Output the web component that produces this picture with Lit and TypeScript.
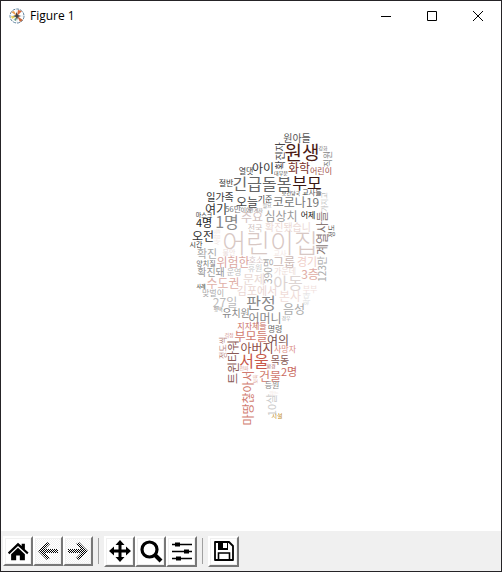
import { LitElement, html, svg, css } from "lit";
import { customElement } from "lit/decorators.js";

type Word = [text: string, cx: number, cy: number, size: number, color: string, vertical?: boolean];

const WORDS: Word[] = [
  ["원아들", 297, 138, 10, "#555"],
  ["원생", 302, 153, 19, "#4a1a14"],
  ["확진자", 280, 156, 10, "#444", true],
  ["직원", 328, 159, 9, "#888", true],
  ["강화", 323, 148, 5, "#777"],
  ["화학", 299, 168, 12, "#7a2f28"],
  ["어린이", 321, 171, 8, "#a0504a"],
  ["대부분", 281, 173, 5, "#444"],
  ["아이", 263, 168, 12, "#333"],
  ["열댓", 246, 171, 8, "#444"],
  ["절반", 226, 183, 8, "#333"],
  ["긴급돌봄", 262, 184, 16, "#666"],
  ["부모", 307, 183, 16, "#3a1712"],
  ["보건당국", 291, 193, 5, "#333"],
  ["교사들", 312, 192, 7, "#444"],
  ["일가족", 220, 197, 10, "#333"],
  ["오늘", 247, 202, 12, "#444"],
  ["기준", 265, 199, 8, "#444"],
  ["필요", 267, 205, 5, "#999"],
  ["여기", 216, 209, 12, "#333"],
  ["56만", 233, 209, 8, "#777"],
  ["이에", 246, 210, 6, "#777"],
  ["관계자", 256, 210, 5, "#888"],
  ["마스크", 204, 215, 6, "#333"],
  ["4명", 204, 223, 11, "#222"],
  ["1명", 227, 222, 16, "#888"],
  ["오전", 203, 236, 12, "#333"],
  ["시간", 196, 244, 7, "#333"],
  ["사람들", 217, 237, 6, "#efe4e1", true],
  ["주요", 252, 217, 12, "#d3c3bf"],
  ["전국", 255, 228, 8, "#cdbfbc"],
  ["코로나19", 296, 202, 12, "#777"],
  ["심상치", 281, 216, 12, "#999"],
  ["어제", 308, 215, 8, "#111"],
  ["확진됐습니", 288, 227, 10, "#ecdad6"],
  ["어린이집", 270, 243, 26, "#d8c8c4"],
  ["계열사들", 322, 233, 12, "#8a7a78", true],
  ["정도", 331, 231, 7, "#555", true],
  ["가지고", 324, 202, 7, "#bbb", true],
  ["확진", 207, 254, 11, "#aaa"],
  ["양치질", 206, 263, 7, "#777"],
  ["불안", 229, 252, 7, "#ecdedc"],
  ["위험한", 233, 262, 12, "#dba79f"],
  ["호소", 256, 260, 8, "#d8c8c8"],
  ["휴원", 255, 268, 8, "#ccc"],
  ["교사", 280, 253, 7, "#f3e6e3"],
  ["그룹", 284, 262, 12, "#cbb8b4"],
  ["경기", 307, 262, 11, "#f0cfc8"],
  ["확진돼", 211, 272, 10, "#999"],
  ["운영", 234, 272, 8, "#bbb"],
  ["390명", 268, 271, 10, "#aaa", true],
  ["가운데", 285, 271, 8, "#ecdcd8"],
  ["3층", 310, 274, 12, "#e0aca4"],
  ["123만", 322, 269, 10, "#aaa", true],
  ["문제", 254, 279, 12, "#e8d8d4"],
  ["아동", 288, 283, 16, "#ddd5d3"],
  ["수도권", 223, 283, 12, "#dfb0a8"],
  ["사례", 201, 286, 5, "#111"],
  ["맞벌이", 213, 293, 8, "#aaa"],
  ["김포에서", 257, 291, 11, "#ead6d2"],
  ["부부", 310, 289, 8, "#f0e0dc"],
  ["본사", 290, 296, 12, "#f0dcd8"],
  ["27일", 225, 302, 12, "#bbb"],
  ["판정", 261, 303, 16, "#888"],
  ["음성", 294, 309, 12, "#aaa"],
  ["확대", 306, 299, 7, "#ddd", true],
  ["평택", 218, 309, 5, "#888"],
  ["유치원", 236, 313, 10, "#888"],
  ["어머니", 265, 318, 12, "#888"],
  ["경우", 286, 318, 5, "#aaa"],
  ["지자체들", 252, 326, 8, "#c96a5e"],
  ["명령", 275, 329, 8, "#666"],
  ["걱정", 229, 335, 5, "#d2908a"],
  ["부모들", 251, 336, 12, "#d07a6e"],
  ["여의", 278, 340, 12, "#7a5552"],
  ["정도씩", 223, 348, 8, "#b98680", true],
  ["트윈타워", 233, 362, 12, "#8a5a56", true],
  ["아버지", 257, 348, 12, "#8a4a44"],
  ["사망자", 285, 349, 8, "#d98a80"],
  ["서울", 254, 361, 16, "#c8584a"],
  ["목동", 280, 360, 10, "#8a5a56"],
  ["환경", 271, 366, 5, "#a66"],
  ["전파", 244, 368, 5, "#d99a92"],
  ["건물", 270, 376, 12, "#d07a6e"],
  ["2명", 289, 372, 11, "#c96a5e"],
  ["보육", 255, 379, 5, "#e0a69e", true],
  ["등원", 272, 385, 8, "#888"],
  ["않는", 274, 393, 5, "#f2e4e0"],
  ["마땅찮아서", 248, 398, 12, "#d07a6e", true],
  ["10살", 272, 405, 11, "#ccc", true],
  ["시설", 277, 416, 6, "#c08a20"],
];

@customElement("word-cloud")
export class WordCloud extends LitElement {
  static styles = css`
    :host {
      display: flex;
      justify-content: center;
      align-items: center;
    }
    .cloud {
      width: 100%;
      height: 100%;
    }
    .word {
      font-family: "Noto Sans CJK KR", sans-serif;
      font-weight: 400;
      text-anchor: middle;
    }
    .large {
      font-weight: 300;
    }
  `;

  render() {
    return html`<svg class="cloud" viewBox="1 30 500 501" role="img" aria-label="Word cloud">
      ${WORDS.map(
        ([text, cx, cy, size, color, vertical]) => svg`<text
          class=${size > 19 ? "word large" : "word"}
          transform=${`translate(${cx} ${cy}) rotate(${vertical ? -90 : 0})`}
          dy="0.38em"
          font-size=${size}
          fill=${color}
        >${text}</text>`
      )}
    </svg>`;
  }
}

const stipple = svg`<defs>
  <pattern id="dots" width="2" height="2" patternUnits="userSpaceOnUse">
    <rect width="2" height="2" fill="#fff"/>
    <rect width="1" height="1" fill="#000"/>
    <rect x="1" y="1" width="1" height="1" fill="#000"/>
  </pattern>
</defs>`;

const ICONS = {
  home: svg`<path d="M1 13.500 12 3l4 3.500V4h3.500v6l4 3.500-1.500 2L12 6.500 2.500 15.500z"/><path d="M4.500 15.500 12 8.500l7.500 7V22H14v-5h-4v5H4.500z"/>`,
  back: svg`${stipple}<path fill="url(#dots)" d="M2 12 11 3l3 2-5 5h13v4H9l5 5-3 2z"/>`,
  forward: svg`${stipple}<path fill="url(#dots)" d="M22 12 13 3l-3 2 5 5H2v4h13l-5 5 3 2z"/>`,
  pan: svg`<path d="M12 1l4.500 5h-3v4.500h4.500v-3L23 12l-5 4.500v-3h-4.500V18h3L12 23l-4.500-5h3v-4.500H6v3L1 12l5-4.500v3h4.500V6h-3z"/>`,
  zoom: svg`<circle cx="10.500" cy="10.500" r="7.500" fill="none" stroke="#000" stroke-width="3.200"/><path d="M16 16l6 6" stroke="#000" stroke-width="4"/>`,
  sliders: svg`<path d="M2 5.500h20M2 12.500h20M2 19.500h20" stroke="#000" stroke-width="1.600"/><path d="M5 3.500h5v4H5zM14 10.500h5v4h-5zM6 17.500h5v4H6z"/>`,
  save: svg`<path d="M3 3h14l4 4v14H3z" fill="none" stroke="#000" stroke-width="1.800" stroke-linejoin="round"/><path d="M6 3h10v8H6z"/><path d="M11 4h4v5h-4z" fill="#fff"/><path d="M6.500 21v-7h11v7" fill="none" stroke="#000" stroke-width="1.600"/>`,
};

type Tool = { icon: keyof typeof ICONS; label: string; disabled?: boolean };

const GROUPS: Tool[][] = [
  [
    { icon: "home", label: "Home" },
    { icon: "back", label: "Back", disabled: true },
    { icon: "forward", label: "Forward", disabled: true },
  ],
  [
    { icon: "pan", label: "Pan" },
    { icon: "zoom", label: "Zoom" },
    { icon: "sliders", label: "Configure subplots" },
  ],
  [{ icon: "save", label: "Save" }],
];

@customElement("app-root")
export class AppRoot extends LitElement {
  static styles = css`
    :host {
      display: flex;
      flex-direction: column;
      box-sizing: border-box;
      min-height: 100vh;
      border: 1px solid #252326;
      background: #fff;
      color: #000;
      font-family: "Noto Sans", sans-serif;
    }
    .titlebar {
      display: flex;
      align-items: center;
      height: 29px;
      padding-left: 8px;
    }
    .logo {
      width: 16px;
      height: 16px;
      margin-right: 5px;
    }
    .title {
      flex: 1;
      margin: 0;
      font: 400 12px/16px "Open Sans", sans-serif;
    }
    .control {
      display: grid;
      place-items: center;
      width: 46px;
      height: 29px;
      padding: 0;
      border: 0;
      background: none;
    }
    .control svg {
      width: 10px;
      height: 10px;
    }
    .canvas {
      flex: 1;
      min-height: 0;
    }
    .toolbar {
      display: flex;
      align-items: center;
      height: 40px;
      padding-left: 2px;
      background: #f0f0f0;
    }
    .group {
      display: flex;
      align-items: center;
    }
    .group + .group::before {
      content: "";
      width: 1px;
      height: 26px;
      margin: 0 5px;
      background: #a0a0a0;
    }
    .tool {
      box-sizing: border-box;
      display: grid;
      place-items: center;
      width: 30px;
      height: 30px;
      padding: 0;
      border: 2px solid;
      border-color: #fff #777 #777 #fff;
      background: #fff;
      box-shadow: inset 0 0 0 1px #f0f0f0;
    }
    .tool:disabled {
      background: repeating-conic-gradient(#f0f0f0 0 25%, #fff 0 50%) 0 0 / 2px 2px;
    }
    .group:nth-child(n + 2) .tool {
      width: 31px;
      height: 31px;
    }
    .tool svg {
      width: 24px;
      height: 24px;
    }
    .tool[aria-label="Home"] svg {
      width: 22px;
      height: 22px;
    }
  `;

  render() {
    return html`
      <header class="titlebar">
        <svg class="logo" viewBox="0 0 16 16" aria-hidden="true">
          <circle cx="8" cy="8" r="7" fill="#fff" stroke="#5b7f9c" stroke-dasharray="3 1"/>
          <path d="M1 8h14M8 1v14M3 3l10 10M3 13 13 3" stroke="#c9d2d8" stroke-width=".5"/>
          <path d="M8 8 2 4 5 3z" fill="#e9a052"/>
          <path d="M8 8 9 2l4 1z" fill="#d96b3c"/>
          <path d="M8 8 2 8l1 3z" fill="#e8d15c"/>
          <path d="M8 8l6 4-3 2z" fill="#c96a3c"/>
          <path d="M8 8l-1 5-2-1z" fill="#5f9c7c"/>
          <path d="M7 4l2 3 3 1-3 1-1 3-1-3-3-1 3-1z" fill="#444"/>
        </svg>
        <h1 class="title">Figure 1</h1>
        <button class="control" aria-label="Minimize">
          <svg viewBox="0 0 10 10"><path d="M0 5.500h10" stroke="#000"/></svg>
        </button>
        <button class="control" aria-label="Maximize">
          <svg viewBox="0 0 10 10"><path d="M.5.5h9v9h-9z" fill="none" stroke="#000"/></svg>
        </button>
        <button class="control" aria-label="Close">
          <svg viewBox="0 0 10 10"><path d="M0 0l10 10M10 0 0 10" stroke="#000"/></svg>
        </button>
      </header>
      <word-cloud class="canvas"></word-cloud>
      <nav class="toolbar" aria-label="Figure tools">
        ${GROUPS.map(
          (group) => html`<div class="group">
            ${group.map(
              (tool) => html`<button class="tool" aria-label=${tool.label} ?disabled=${tool.disabled}>
                <svg viewBox="0 0 24 24" aria-hidden="true">${ICONS[tool.icon]}</svg>
              </button>`
            )}
          </div>`
        )}
      </nav>
    `;
  }
}
